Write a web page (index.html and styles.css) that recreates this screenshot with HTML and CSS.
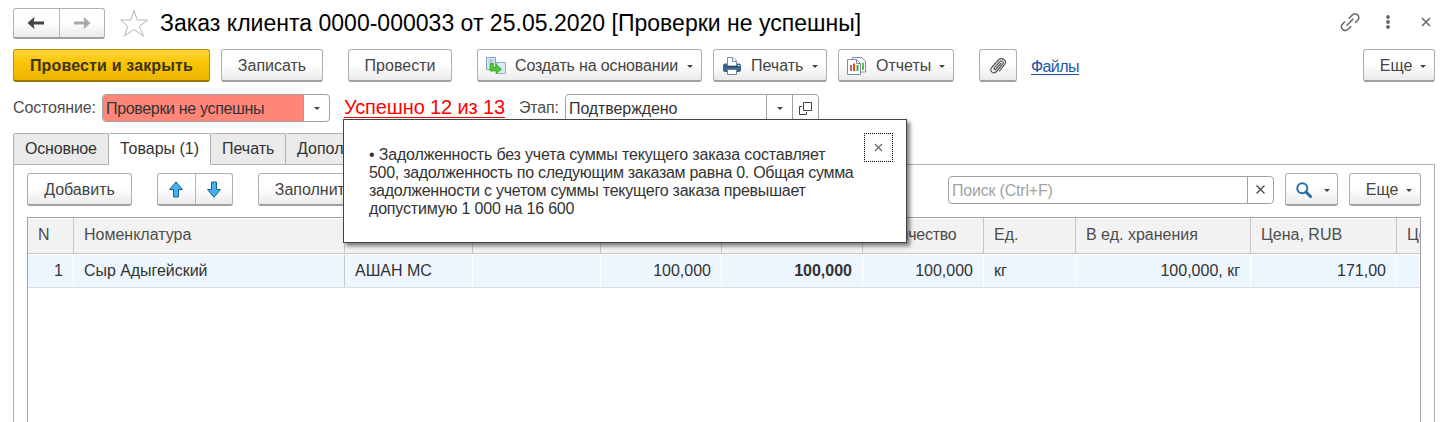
FILE: index.html
```html
<!DOCTYPE html>
<html lang="ru">
<head>
<meta charset="utf-8">
<title>Заказ клиента</title>
<link rel="stylesheet" href="styles.css">
</head>
<body>
<div class="window">
  <header class="titlebar">
    <div class="btn-group nav">
      <span class="seg"><svg width="18" height="14" viewBox="0 0 18 14"><path d="M.5 7 7.500.8 6.700 5.500H17v3H6.700l.8 4.700z" fill="#444"/></svg></span>
      <span class="seg"><svg width="18" height="14" viewBox="0 0 18 14"><path d="M17.500 7 10.500.8l.8 4.700H1v3h10.300l-.8 4.700z" fill="#a9a9a9"/></svg></span>
    </div>
    <svg class="star" width="30" height="29" viewBox="0 0 30 29"><path d="M15 1.500 18.300 11H28.500L20.300 17.300 24.500 27 15 20.500 5.500 27 8.800 17.300 1.500 11H11.700z" fill="#fff" stroke="#b0b5bb"/></svg>
    <h1 class="title">Заказ клиента 0000-000033 от 25.05.2020 [Проверки не успешны]</h1>
    <div class="window-tools">
      <svg width="20" height="20" viewBox="0 0 20 20" fill="none" stroke="#666" stroke-width="1.500" stroke-linecap="round"><path d="M9.300 6.300 12 3.300Q14 1 16.700 2.200 20 4.500 18.200 7.500L15.500 10.500M10.700 14.500 8.300 17Q6 19.200 3.300 18 .2 15.500 2 12.700L4.500 10M7 13.200 13 7"/></svg>
      <svg width="6" height="14" viewBox="0 0 6 14" fill="#666"><circle cx="3" cy="2" r="1.900"/><circle cx="3" cy="7" r="1.900"/><circle cx="3" cy="12" r="1.900"/></svg>
      <svg width="10" height="10" viewBox="0 0 10 10"><path d="m1 1 8 8M9 1 1 9" stroke="#666" stroke-width="1.500"/></svg>
    </div>
  </header>

  <div class="commands">
    <span class="btn primary">Провести и закрыть</span>
    <span class="btn save">Записать</span>
    <span class="btn post">Провести</span>
    <span class="btn create">
      <svg width="20" height="18" viewBox="0 0 20 18"><path d="M.5.500h9v12h-9z" fill="#dce9f2" stroke="#7fa5c2"/><path d="M2.500 3h5M2.500 5h5" stroke="#8fb2ca"/><path d="M10.500 5.500h9v11h-9z" fill="#dce9f2" stroke="#8fb0c8"/><path d="M4 6.500h3.500V10.500h2.500V7.500l5.500 4.700-5.500 4.500V14H4z" fill="#4cc832" stroke="#2f9f1e" stroke-width=".7"/></svg>
      <span class="label">Создать на основании</span><i class="caret"></i></span>
    <span class="btn print">
      <svg width="18" height="18" viewBox="0 0 18 18"><rect y="6.500" width="18" height="8.500" rx="2" fill="#3d658a"/><path d="M4.500 9V.5h5.500l3.500 3.500V9z" fill="#fff" stroke="#7890a5"/><path d="M9.500.5v4h4" fill="none" stroke="#7890a5"/><path d="M3 9.500h12" stroke="#1f4265"/><path d="M15 8.500h1.500" stroke="#fff"/><path d="M4.500 12.500h9v5h-9z" fill="#fff" stroke="#6685a1"/></svg>
      <span class="label">Печать</span><i class="caret"></i></span>
    <span class="btn reports">
      <svg width="20" height="19" viewBox="0 0 20 19"><path d="M5.500.5h9l4 3.500v11h-13z" fill="#fff" stroke="#7890a5"/><path d="M16 6v7" stroke="#67b84b" stroke-width="2"/><path d="M.5 2.500h9l4 4v11H.5z" fill="#fff" stroke="#7890a5"/><path d="M9.500 2.500v4h4" fill="none" stroke="#7890a5"/><path d="M4 8v6" stroke="#b86b61" stroke-width="2"/><path d="M7 6.500V14" stroke="#ff3725" stroke-width="2"/><path d="M10.500 8v6" stroke="#2fb62f" stroke-width="2"/></svg>
      <span class="label">Отчеты</span><i class="caret"></i></span>
    <span class="btn clip"><svg width="16" height="17" viewBox="0 0 16 17" fill="none" stroke="#555" stroke-width="1.200" stroke-linecap="round" stroke-linejoin="round"><path d="M11 5.500 6 11C4.800 12.200 3.500 11 4.500 9.700L9.700 4C12 1.700 14.300 4 12.500 6.300L6.500 13.500C3.500 17-1 13 1.700 9.500L8.500 2C12-1.500 17.500 2.500 14.500 6.700L9.500 13"/></svg></span>
    <a class="files">Файлы</a>
    <span class="btn more">Еще<i class="caret"></i></span>
  </div>

  <div class="status-row">
    <span class="caption state-caption">Состояние:</span>
    <div class="field state"><span class="value">Проверки не успешны</span><span class="drop"><i class="caret"></i></span></div>
    <a class="result">Успешно 12 из 13</a>
    <span class="caption stage-caption">Этап:</span>
    <div class="field stage"><span class="value">Подтверждено</span><span class="drop"><i class="caret"></i></span><span class="drop"><svg width="13" height="13" viewBox="0 0 13 13" fill="none" stroke="#444"><path d="M4.500.5h8v8h-8zM3 4.500H.5v8h7V10"/></svg></span></div>
  </div>

  <nav class="tabs">
    <span class="tab main">Основное</span>
    <span class="tab goods active">Товары (1)</span>
    <span class="tab printing">Печать</span>
    <span class="tab extra">Дополнительно</span>
    <span class="tab-rest"></span>
  </nav>

  <section class="panel">
    <div class="toolbar">
      <span class="btn add">Добавить</span>
      <div class="btn-group order">
        <span class="seg"><svg width="16" height="17" viewBox="0 0 16 17"><path d="m8 .8 6.500 7.700H10.500v7.500h-5V8.500H1.500z" fill="#45b0ee" stroke="#17608f"/></svg></span>
        <span class="seg"><svg width="16" height="17" viewBox="0 0 16 17"><path d="M8 16.200 14.500 8.500H10.500V1h-5v7.500H1.500z" fill="#45b0ee" stroke="#17608f"/></svg></span>
      </div>
      <span class="btn fill">Заполнить</span>
      <div class="field search"><span class="value">Поиск (Ctrl+F)</span><span class="drop"><svg width="9" height="9" viewBox="0 0 9 9"><path d="m.5.500 8 8M8.500.5l-8 8" stroke="#444" stroke-width="1.200"/></svg></span></div>
      <span class="btn find"><svg width="16" height="16" viewBox="0 0 16 16" fill="none" stroke="#246fa8"><circle cx="6.300" cy="6.300" r="5" stroke-width="2"/><path d="m10 10 4.500 4.500" stroke-width="3" stroke-linecap="round"/></svg><i class="caret"></i></span>
      <span class="btn more">Еще<i class="caret"></i></span>
    </div>

    <div class="grid">
      <div class="row head">
        <span class="cell">N</span><span class="cell">Номенклатура</span><span class="cell"></span><span class="cell"></span><span class="cell"></span><span class="cell"></span><span class="cell quantity">Количество</span><span class="cell">Ед.</span><span class="cell">В ед. хранения</span><span class="cell">Цена, RUB</span><span class="cell">Цена</span>
      </div>
      <div class="row item">
        <span class="cell num">1</span><span class="cell fixed">Сыр Адыгейский</span><span class="cell">АШАН МС</span><span class="cell"></span><span class="cell num">100,000</span><span class="cell num strong">100,000</span><span class="cell num">100,000</span><span class="cell">кг</span><span class="cell num">100,000, кг</span><span class="cell num">171,00</span><span class="cell"></span>
      </div>
    </div>
  </section>

  <aside class="popup">
    <p class="message"><span class="line first">• Задолженность без учета суммы текущего заказа составляет</span> <span class="line second">500, задолженность по следующим заказам равна 0. Общая сумма</span> <span class="line third">задолженности с учетом суммы текущего заказа превышает</span> <span class="line">допустимую 1 000 на 16 600</span></p>
    <span class="dismiss"><svg width="9" height="9" viewBox="0 0 9 9"><path d="m1 1 7 7M8 1 1 8" stroke="#666" stroke-width="1.100"/></svg></span>
  </aside>
</div>
</body>
</html>
```
FILE: styles.css
```css
* { box-sizing: border-box; }
body { margin: 0; background: #fff; color: #333; font: 16px/18px "Liberation Sans", Arial, sans-serif; overflow: hidden; }
.window { position: relative; width: 1454px; height: 422px; padding: 8px 19px 0 13px; overflow: hidden; display: flex; flex-direction: column; white-space: nowrap; }
svg { display: block; flex: none; }

.btn, .btn-group { display: flex; align-items: center; justify-content: center; flex: none; height: 33px; border: 1px solid #b0b0b0; border-bottom: 2px solid #a0a0a0; border-radius: 3px; background: linear-gradient(#fff 45%, #ebebeb); color: #444; }
.btn { padding-top: 2px; }
.seg { display: flex; flex: 1; height: 100%; align-items: center; justify-content: center; }
.seg + .seg { border-left: 1px solid #b8b8b8; }
.caret { width: 0; height: 0; border: 3px solid transparent; border-top: 3.500px solid #444; border-bottom: 0; flex: none; }

.titlebar { display: flex; align-items: center; height: 31px; flex: none; }
.nav { width: 92px; height: 31px; }
.star { margin-left: 14px; }
.title { margin: 0 0 2px 11px; font-size: 23px; line-height: 30px; font-weight: 400; color: #000; letter-spacing: .015px; }
.window-tools { display: flex; align-items: center; margin-left: auto; padding: 0 4px 3px 0; }
.window-tools svg + svg { margin-left: 25px; }
.window-tools svg:last-child { margin-left: 30px; }

.commands { display: flex; flex: none; height: 33px; margin-top: 10px; }
.primary { width: 197px; font-weight: 700; letter-spacing: .15px; color: #3d3414; border-color: #b8900d; border-bottom-color: #9a7500; background: linear-gradient(#ffd43b, #fac505 45%, #eab500); }
.save { width: 102px; margin-left: 11px; }
.post { width: 104px; margin-left: 25px; }
.create, .print, .reports { justify-content: flex-start; padding-left: 8px; }
.create { width: 225px; margin-left: 25px; }
.create .label { margin: 0 9px; letter-spacing: -.15px; }
.print { width: 114px; margin-left: 11px; padding-left: 9px; }
.print .label { margin: 0 9px 0 10px; }
.reports { width: 116px; margin-left: 11px; }
.reports .label { margin: 0 8px 0 9px; }
.clip { width: 38px; margin-left: 25px; }
.files { margin-left: 14px; align-self: flex-start; margin-top: 9px; height: 17px; color: #1b53ad; border-bottom: 1px solid #1b53ad; letter-spacing: -.6px; }
.more { width: 72px; margin-left: auto; padding-left: 8px; gap: 8px; }

.status-row { display: flex; flex: none; align-items: center; height: 28px; margin-top: 12px; }
.caption { color: #4d4d4d; letter-spacing: -.15px; }
.state-caption { width: 89px; }
.field { display: flex; flex: none; height: 28px; border: 1px solid #a0a0a0; border-radius: 4px; background: #fff; overflow: hidden; }
.field .value { flex: 1; padding: 5px 0 0 3px; color: #333; }
.drop { display: flex; width: 26px; flex: none; align-items: center; justify-content: center; border-left: 1px solid #a0a0a0; }
.state { width: 228px; }
.state .value { background: #ff8679; letter-spacing: -.33px; }
.result { margin-left: 14px; font-size: 20px; line-height: 23px; height: 22px; width: 161px; letter-spacing: -.13px; color: #f00; border-bottom: 1px solid #f00; margin-bottom: 2px; }
.stage-caption { margin-left: 14px; }
.stage { width: 254px; margin-left: auto; margin-right: 616px; }
.stage .value { letter-spacing: -.1px; }

.tabs { display: flex; flex: none; height: 32px; margin-top: 11px; }
.tab { flex: none; height: 32px; padding: 6px 0 0 11px; background: #ebebeb; border: 1px solid #b0b0b0; border-left-width: 0; border-radius: 2px 2px 0 0; }
.main { width: 96px; border-left-width: 1px; letter-spacing: -.2px; }
.goods { width: 102px; }
.printing { width: 75px; }
.extra { width: 135px; }
.active { background: #fff; border-bottom-color: #fff; }
.tab-rest { flex: 1; border-bottom: 1px solid #b0b0b0; }

.panel { flex: none; height: 300px; width: 1422px; border: 1px solid #b0b0b0; border-top: 0; padding: 8px 13px 0; }
.toolbar { display: flex; align-items: center; height: 33px; }
.add { width: 105px; }
.order { width: 76px; margin-left: 25px; }
.fill { width: 112px; margin-left: 25px; }
.search { width: 326px; margin-left: auto; }
.search .value { color: #a3a3a3; letter-spacing: -.2px; }
.find { width: 53px; margin: 0 11px; padding-left: 2px; gap: 12px; }
.toolbar .more { margin-left: 0; }

.grid { width: 1394px; height: 240px; margin-top: 11px; border: 1px solid #a0a0a0; overflow: hidden; }
.row { display: grid; grid-template-columns: 46px 271px 128px 128px 121px 141px 121px 92px 175px 146px 23px; }
.head { height: 36px; background: #f2f2f2; color: #4d4d4d; border-bottom: 1px solid #c8c8c8; box-shadow: inset 0 1px #fff; }
.item { height: 34px; background: #edf6fe; border-top: 1px solid #fff; border-bottom: 1px solid #dedede; color: #333; }
.cell { padding: 8px 10px 0; overflow: hidden; min-width: 0; }
.item .cell { padding-top: 7px; }
.head .cell { border-right: 1px solid #c8c8c8; }
.head .cell:last-child { border-right: 0; padding-right: 0; }
.head .quantity { letter-spacing: -.25px; }
.item .cell { border-right: 1px solid #fff; }
.item .fixed { border-right-color: #c8c8c8; letter-spacing: -.05px; }
.num { text-align: right; }
.strong { font-weight: 700; }

.popup { position: absolute; left: 343px; top: 119px; width: 564px; height: 124px; padding: 26px 25px; background: #fff; border: 1px solid #444; box-shadow: 3px 3px 4px rgba(0,0,0,.5); }
.message { margin: 0; color: #333; }
.line { display: block; letter-spacing: -.19px; }
.first { letter-spacing: -.17px; }
.second { letter-spacing: -.29px; }
.third { letter-spacing: -.24px; }
.dismiss { position: absolute; right: 13px; top: 13px; width: 29px; height: 29px; display: flex; align-items: center; justify-content: center; border: 1px dotted #000; }
```
